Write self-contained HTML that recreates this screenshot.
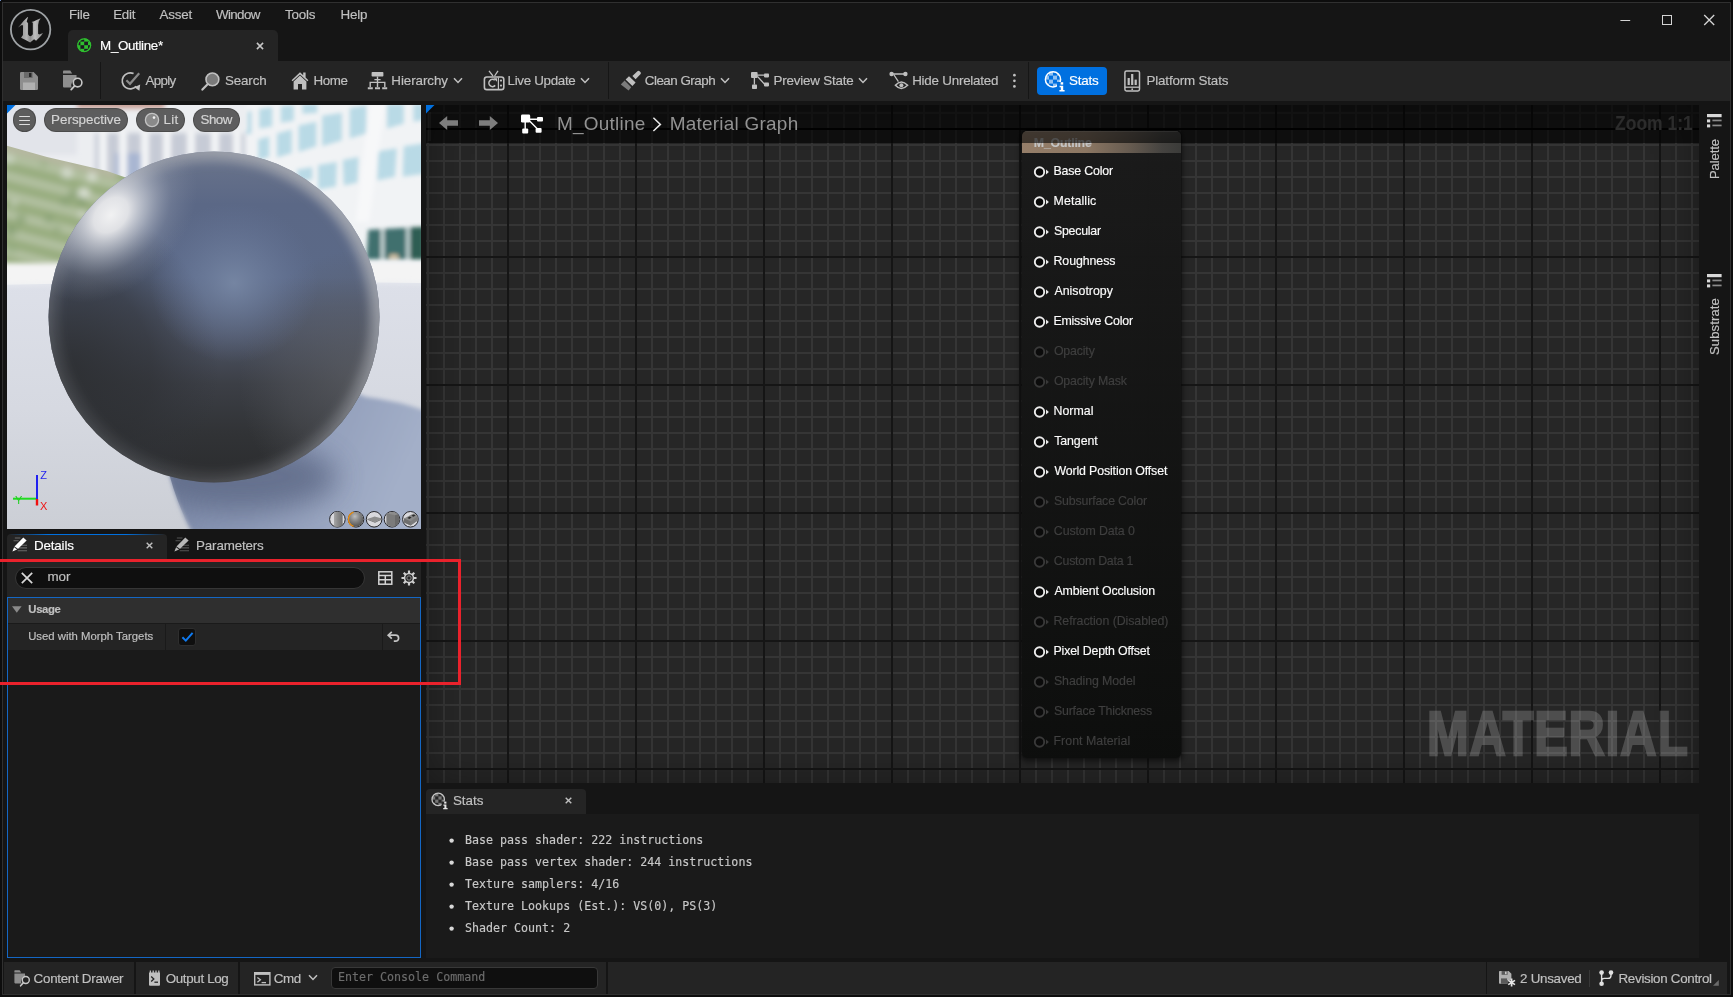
<!DOCTYPE html>
<html lang="en">
<head>
<meta charset="utf-8">
<title>M_Outline - Unreal Editor</title>
<style>
*{box-sizing:border-box;margin:0;padding:0}
html,body{width:1733px;height:997px;overflow:hidden;background:#151515}
body{position:relative;will-change:transform;font-family:"Liberation Sans",sans-serif;color:#c0c0c0;font-size:13px}
.a{position:absolute}
.t{position:absolute;white-space:nowrap;line-height:1;color:#c0c0c0;-webkit-text-stroke:.16px}
.m{font-family:"DejaVu Sans Mono","Liberation Mono",monospace}
.w{color:#fff}
.ns{-webkit-text-stroke:0}
.b{font-weight:bold}
svg{position:absolute;overflow:visible}
.pin{position:absolute;left:1033px;width:16px;height:12px}
.sep{position:absolute;width:1px;background:#151515}
</style>
</head>
<body>
<!-- window frame -->
<div class="a" style="left:0;top:0;width:1733px;height:997px;background:#0d0d0d"></div>
<div class="a" style="left:0;top:0;width:1px;height:1px;background:#6f8cc2"></div>
<div class="a" style="left:2px;top:2px;width:1729px;height:993px;background:#303030"></div>
<div class="a" style="left:3px;top:3px;width:1727px;height:991px;background:#151515"></div>

<!-- document tab -->
<div class="a" style="left:68px;top:30px;width:210px;height:31px;background:#242424;border-radius:5px 5px 0 0"></div>
<!-- toolbar -->
<div class="a" style="left:3px;top:61px;width:1727px;height:40px;background:#242424"></div>
<div class="sep" style="left:100px;top:62px;height:37px;background:#161616"></div>
<div class="sep" style="left:608px;top:62px;height:37px;background:#161616"></div>
<div class="sep" style="left:1028px;top:62px;height:37px;background:#161616"></div>
<div class="a" style="left:1037px;top:67px;width:70px;height:28px;background:#0070e0;border-radius:4px"></div>

<!-- left column panels -->
<div class="a" style="left:7px;top:534px;width:160px;height:25px;background:#242424;border-radius:4px 4px 0 0"></div>
<div class="a" style="left:9px;top:534px;width:156px;height:1px;background:linear-gradient(90deg,rgba(0,112,224,0),#0070e0 25%,#0070e0 75%,rgba(0,112,224,0))"></div>
<div class="a" style="left:7px;top:559px;width:414px;height:39px;background:#242424"></div>
<div class="a" style="left:15px;top:567px;width:350px;height:22px;background:#0f0f0f;border:1px solid #363636;border-radius:11px"></div>
<div class="a" style="left:7px;top:597px;width:414px;height:361px;background:#1a1a1a;border:1px solid #1467c4"></div>
<div class="a" style="left:8px;top:598px;width:412px;height:25px;background:#2f2f2f"></div>
<div class="a" style="left:8px;top:623px;width:412px;height:1px;background:#1a1a1a"></div>
<div class="a" style="left:8px;top:624px;width:412px;height:26px;background:#242424"></div>
<div class="a" style="left:165px;top:624px;width:1px;height:26px;background:#1a1a1a"></div>
<div class="a" style="left:382px;top:624px;width:1px;height:26px;background:#1a1a1a"></div>
<div class="a" style="left:178px;top:628px;width:18px;height:18px;background:#0f0f0f;border:1px solid #2e2e2e;border-radius:3px"></div>

<!-- stats panel -->
<div class="a" style="left:426px;top:789px;width:160px;height:25px;background:#242424;border-radius:4px 4px 0 0"></div>
<div class="a" style="left:426px;top:814px;width:1273px;height:144px;background:#1a1a1a"></div>

<!-- status bar -->
<div class="a" style="left:4px;top:962px;width:130px;height:32px;background:#242424"></div>
<div class="a" style="left:136px;top:962px;width:102px;height:32px;background:#242424"></div>
<div class="a" style="left:240px;top:962px;width:366px;height:32px;background:#242424"></div>
<div class="a" style="left:608px;top:962px;width:878px;height:32px;background:#242424"></div>
<div class="a" style="left:1487px;top:962px;width:240px;height:32px;background:#242424"></div>
<div class="a" style="left:331px;top:967px;width:267px;height:22px;background:#0f0f0f;border:1px solid #383838;border-radius:4px"></div>
<div class="a" style="left:1589px;top:970px;width:1px;height:17px;background:#383838"></div>
<!-- viewport -->
<svg style="left:7px;top:105px" width="414" height="424" viewBox="0 0 414 424">
<defs>
<clipPath id="vpc"><rect x="0" y="0" width="414" height="424"/></clipPath>
<clipPath id="shc"><path d="M160 360L180 300L330 280L359 292Q392 296 419 306V430H186Q168 395 160 360Z"/></clipPath><clipPath id="folc"><path d="M-10 38L40 52L100 66L140 80V172H-10Z"/></clipPath><clipPath id="sphc"><circle cx="207" cy="212" r="165.5"/></clipPath>
<filter id="bl3" filterUnits="userSpaceOnUse" x="-60" y="-60" width="534" height="544"><feGaussianBlur stdDeviation="2.6"/></filter>
<filter id="bl2" filterUnits="userSpaceOnUse" x="-60" y="-60" width="534" height="544"><feGaussianBlur stdDeviation="1.9"/></filter>
<filter id="bl4" filterUnits="userSpaceOnUse" x="-60" y="-60" width="534" height="544"><feGaussianBlur stdDeviation="3.6"/></filter><filter id="bl6" filterUnits="userSpaceOnUse" x="-60" y="-60" width="534" height="544"><feGaussianBlur stdDeviation="5"/></filter>
<filter id="bl9" filterUnits="userSpaceOnUse" x="-60" y="-60" width="534" height="544"><feGaussianBlur stdDeviation="9"/></filter>
<filter id="bl14" filterUnits="userSpaceOnUse" x="-80" y="-80" width="574" height="584"><feGaussianBlur stdDeviation="14"/></filter>
<filter id="bl25" filterUnits="userSpaceOnUse" x="-100" y="-100" width="614" height="624"><feGaussianBlur stdDeviation="24"/></filter>
<linearGradient id="floorg" x1="0" y1="0" x2="0" y2="1"><stop offset="0" stop-color="#dde0e9"/><stop offset=".5" stop-color="#d6d9e1"/><stop offset="1" stop-color="#cbced5"/></linearGradient>
<linearGradient id="shadg" x1="0" y1="0" x2="1" y2="0.25"><stop offset="0" stop-color="#74819f"/><stop offset=".4" stop-color="#8895b3"/><stop offset="1" stop-color="#a3afc8"/></linearGradient>
<linearGradient id="sphg" x1="0" y1="46" x2="0" y2="378" gradientUnits="userSpaceOnUse"><stop offset="0" stop-color="#6a748b"/><stop offset=".16" stop-color="#5b6886"/><stop offset=".38" stop-color="#5b6987"/><stop offset=".55" stop-color="#4e5566"/><stop offset=".70" stop-color="#3c3f46"/><stop offset=".85" stop-color="#313336"/><stop offset="1" stop-color="#2b2c2e"/></linearGradient>
<radialGradient id="spot" cx="0.5" cy="0.5" r="0.5"><stop offset="0" stop-color="#7888a5" stop-opacity=".9"/><stop offset=".45" stop-color="#7080a0" stop-opacity=".5"/><stop offset="1" stop-color="#66759a" stop-opacity="0"/></radialGradient>
<radialGradient id="hl" cx="0.5" cy="0.5" r="0.5"><stop offset="0" stop-color="#f6f6f6" stop-opacity=".97"/><stop offset=".2" stop-color="#efeff0" stop-opacity=".9"/><stop offset=".42" stop-color="#d4d7dd" stop-opacity=".6"/><stop offset=".7" stop-color="#a8aebc" stop-opacity=".22"/><stop offset="1" stop-color="#8a92a6" stop-opacity="0"/></radialGradient>
<linearGradient id="rimg" x1="0" y1="1" x2="1" y2="0"><stop offset="0" stop-color="#9a9da4" stop-opacity=".06"/><stop offset=".45" stop-color="#9a9da4" stop-opacity=".3"/><stop offset="1" stop-color="#b0b3ba" stop-opacity=".95"/></linearGradient>
<radialGradient id="ldk" cx=".5" cy=".5" r=".5"><stop offset="0" stop-color="#2b2d30" stop-opacity=".85"/><stop offset=".55" stop-color="#2d2f33" stop-opacity=".6"/><stop offset="1" stop-color="#30333a" stop-opacity="0"/></radialGradient><radialGradient id="rlt" cx=".5" cy=".5" r=".5"><stop offset="0" stop-color="#63656a" stop-opacity=".6"/><stop offset=".6" stop-color="#5a5c62" stop-opacity=".35"/><stop offset="1" stop-color="#55575c" stop-opacity="0"/></radialGradient><linearGradient id="leftdark" x1="0" y1="0" x2="1" y2="0"><stop offset="0" stop-color="#2c2d30" stop-opacity=".8"/><stop offset=".3" stop-color="#2e3034" stop-opacity=".55"/><stop offset=".55" stop-color="#30333a" stop-opacity="0"/></linearGradient>
</defs>
<g clip-path="url(#vpc)">
<rect width="414" height="424" fill="#eceef1"/>
<!-- right building: pale blue windows, white frames -->
<rect x="225" y="-6" width="200" height="190" fill="#f1f3f5"/>
<g filter="url(#bl2)">
<g fill="#b9dae6">
<path d="M252.3 3.9L265.1 1.9L265.1 21.6L252.3 23.6Z"/>
<path d="M273.9 1.0L286.7 -0.0L286.7 15.7L273.9 17.7Z"/>
<path d="M295.5 -1.0L310.2 -1.0L310.2 7.8L295.5 8.8Z"/>
<path d="M238.5 6.9L244.4 5.9L244.4 28.5L238.5 29.5Z"/>
<path d="M251.3 34.4L262.1 31.4L262.1 52.0L251.3 55.0Z"/>
<path d="M270.0 28.5L284.7 24.5L284.7 48.1L270.0 52.4Z"/>
<path d="M291.6 20.6L309.3 16.7L309.3 41.2L291.6 47.1Z"/>
<path d="M315.2 10.8L334.8 7.8L334.8 35.3L315.2 41.2Z"/>
<path d="M342.7 2.9L359.4 -0.0L359.4 28.5L342.7 33.4Z"/>
<path d="M380.0 -1.0L396.7 -1.0L396.7 18.6L380.0 23.6Z"/>
<path d="M406.5 -1.0L417.3 -1.0L417.3 14.7L406.5 16.7Z"/>
<path d="M289.6 64.8L305.3 61.9L305.3 74.6L291.6 76.6Z"/>
<path d="M311.2 59.9L329.9 57.0L328.9 81.5L311.2 84.5Z"/>
<path d="M335.8 55.0L351.5 52.0L350.5 77.6L336.8 80.5Z"/>
<path d="M371.2 46.2L389.8 43.2L387.9 71.7L370.2 75.6Z"/>
<path d="M396.7 41.2L417.3 38.3L417.3 68.7L395.7 71.7Z"/>
</g>
<path d="M362.3 -1L378 -1L362.3 117L348.6 117Z" fill="#f7f8f9"/>
<path d="M361.3 124.7L417.3 121.8V154.2H359.4Z" fill="#3f6f6e"/>
<path d="M404 122.5L417.3 121.8V154.2H403Z" fill="#2f5d52"/>
<path d="M375.5 124V154M401 122.8V154" stroke="#d5e2e3" stroke-width="3.2"/>
<ellipse cx="386.9" cy="151.5" rx="5" ry="2.2" fill="#dcc6a6"/>
</g>
<!-- middle building columns -->
<g filter="url(#bl3)">
<rect x="88" y="28" width="150" height="52" fill="#c6cbd6"/>
<rect x="108" y="48" width="30" height="30" fill="#a9b6d2"/>
<g stroke="#f3f4f6" stroke-width="8"><path d="M96 26V86"/><path d="M116 26V92"/><path d="M138 26V92"/><path d="M160 24V86"/><path d="M184 22V76"/><path d="M208 20V66"/><path d="M230 18V60"/></g>
<rect x="50" y="-6" width="190" height="32" fill="#eceef1"/>
<rect x="64" y="-6" width="94" height="10" fill="#c89f94"/>
<rect x="-6" y="-6" width="76" height="56" fill="#e2e4ea"/>
</g>
<!-- foliage -->
<g clip-path="url(#folc)"><g filter="url(#bl4)">
<rect x="-12" y="30" width="150" height="150" fill="#a8b893"/>
<path d="M-10 2L130 38" stroke="#85a066" stroke-width="8" opacity=".55"/><path d="M-10 11L130 47" stroke="#c6d1bc" stroke-width="5" opacity=".5"/><path d="M-10 21L130 57" stroke="#85a066" stroke-width="8" opacity=".55"/><path d="M-10 30L130 66" stroke="#c6d1bc" stroke-width="5" opacity=".5"/><path d="M-10 40L130 76" stroke="#85a066" stroke-width="8" opacity=".55"/><path d="M-10 49L130 85" stroke="#c6d1bc" stroke-width="5" opacity=".5"/><path d="M-10 59L130 95" stroke="#85a066" stroke-width="8" opacity=".55"/><path d="M-10 68L130 104" stroke="#c6d1bc" stroke-width="5" opacity=".5"/><path d="M-10 78L130 114" stroke="#85a066" stroke-width="8" opacity=".55"/><path d="M-10 87L130 123" stroke="#c6d1bc" stroke-width="5" opacity=".5"/><path d="M-10 97L130 133" stroke="#85a066" stroke-width="8" opacity=".55"/><path d="M-10 106L130 142" stroke="#c6d1bc" stroke-width="5" opacity=".5"/><path d="M-10 116L130 152" stroke="#85a066" stroke-width="8" opacity=".55"/><path d="M-10 125L130 161" stroke="#c6d1bc" stroke-width="5" opacity=".5"/><path d="M-10 135L130 171" stroke="#85a066" stroke-width="8" opacity=".55"/><path d="M-10 144L130 180" stroke="#c6d1bc" stroke-width="5" opacity=".5"/><path d="M-10 154L130 190" stroke="#85a066" stroke-width="8" opacity=".55"/><path d="M-10 163L130 199" stroke="#c6d1bc" stroke-width="5" opacity=".5"/><path d="M-10 173L130 209" stroke="#85a066" stroke-width="8" opacity=".55"/><path d="M-10 182L130 218" stroke="#c6d1bc" stroke-width="5" opacity=".5"/><path d="M-10 192L130 228" stroke="#85a066" stroke-width="8" opacity=".55"/><path d="M-10 201L130 237" stroke="#c6d1bc" stroke-width="5" opacity=".5"/>
<circle cx="42" cy="114" r="4.4" fill="#86a072" opacity=".85"/><circle cx="85" cy="72" r="4.4" fill="#e8ebe4" opacity=".85"/><circle cx="59" cy="71" r="3.9" fill="#86a072" opacity=".85"/><circle cx="5" cy="143" r="4.9" fill="#93ab80" opacity=".85"/><circle cx="58" cy="96" r="5.0" fill="#86a072" opacity=".85"/><circle cx="60" cy="68" r="5.5" fill="#dfe4da" opacity=".85"/><circle cx="2" cy="54" r="4.8" fill="#d2dacb" opacity=".85"/><circle cx="77" cy="88" r="5.5" fill="#e8ebe4" opacity=".85"/><circle cx="50" cy="124" r="3.0" fill="#86a072" opacity=".85"/><circle cx="4" cy="125" r="6.0" fill="#86a072" opacity=".85"/><circle cx="100" cy="147" r="3.8" fill="#93ab80" opacity=".85"/><circle cx="75" cy="109" r="3.2" fill="#dfe4da" opacity=".85"/><circle cx="75" cy="96" r="4.2" fill="#7c9868" opacity=".85"/><circle cx="96" cy="147" r="3.6" fill="#dfe4da" opacity=".85"/><circle cx="92" cy="56" r="5.9" fill="#86a072" opacity=".85"/><circle cx="37" cy="58" r="3.6" fill="#93ab80" opacity=".85"/><circle cx="66" cy="89" r="4.0" fill="#7c9868" opacity=".85"/><circle cx="96" cy="137" r="3.4" fill="#dfe4da" opacity=".85"/><circle cx="69" cy="51" r="5.4" fill="#86a072" opacity=".85"/><circle cx="14" cy="114" r="4.5" fill="#86a072" opacity=".85"/><circle cx="98" cy="138" r="4.9" fill="#86a072" opacity=".85"/><circle cx="7" cy="98" r="3.0" fill="#d2dacb" opacity=".85"/>
<path d="M-10 40L110 70" stroke="#d9c3c8" stroke-width="6" opacity=".6"/>
</g></g>
<g filter="url(#bl3)"><rect x="-6" y="166" width="120" height="8" fill="#eceeea"/></g>
<!-- far ground -->
<rect x="-8" y="158" width="430" height="24" fill="#f4f4f4" filter="url(#bl3)"/>
<!-- floor -->
<path d="M-5 180Q207 174 419 178V430H-5Z" fill="url(#floorg)"/>
<path d="M-5 180Q207 174 419 178" stroke="#eceef2" stroke-width="2" fill="none" filter="url(#bl2)"/>
<!-- shadow -->
<path d="M160 360L180 300L330 280L359 292Q392 296 419 306V430H186Q168 395 160 360Z" fill="url(#shadg)" filter="url(#bl2)"/>
<ellipse cx="235" cy="372" rx="95" ry="34" fill="#5f6b87" opacity=".85" filter="url(#bl14)" clip-path="url(#shc)"/>
<!-- sphere -->
<circle cx="207" cy="212" r="165.5" fill="url(#sphg)"/>
<g clip-path="url(#sphc)">
<ellipse cx="62" cy="262" rx="150" ry="165" fill="url(#ldk)"/>
<ellipse cx="352" cy="275" rx="120" ry="130" fill="url(#rlt)"/>
<ellipse cx="227" cy="178" rx="84" ry="80" fill="url(#spot)"/>
<circle cx="207" cy="212" r="163" fill="none" stroke="url(#rimg)" stroke-width="15" filter="url(#bl6)"/>
<circle cx="207" cy="212" r="165" fill="none" stroke="url(#rimg)" stroke-width="3" filter="url(#bl2)"/>
<ellipse cx="104" cy="110" rx="100" ry="72" fill="url(#hl)" transform="rotate(-46 104 110)"/>
</g>
<!-- axis -->
<path d="M6 393.7H30" stroke="#1fdc1f" stroke-width="2"/><path d="M30 370V394" stroke="#2020f0" stroke-width="2"/><path d="M30 394V400.5" stroke="#f01010" stroke-width="2.4"/>
<text x="33.2" y="374" font-family="Liberation Sans, sans-serif" font-size="11" fill="#2525ee">Z</text>
<text x="33" y="404.5" font-family="Liberation Sans, sans-serif" font-size="11" fill="#ee1515">X</text>
<text x="8" y="398.5" font-family="Liberation Sans, sans-serif" font-size="11" fill="#1fd01f">Y</text>
</g>
</svg>
<svg style="left:7px;top:105px" width="9" height="9" viewBox="0 0 9 9"><path d="M0 0H8.5L0 8.5Z" fill="#0070e0"/></svg>
<!-- viewport toolbar pills -->
<div class="a" style="left:13px;top:108px;width:23px;height:23.5px;border-radius:12px;background:rgba(84,84,84,.94);border:1px solid rgba(60,60,60,.55)"></div>
<div class="a" style="left:44px;top:108px;width:84px;height:23.5px;border-radius:12px;background:rgba(84,84,84,.94);border:1px solid rgba(60,60,60,.55)"></div>
<div class="a" style="left:136px;top:108px;width:49px;height:23.5px;border-radius:12px;background:rgba(84,84,84,.94);border:1px solid rgba(60,60,60,.55)"></div>
<div class="a" style="left:193px;top:108px;width:47px;height:23.5px;border-radius:12px;background:rgba(84,84,84,.94);border:1px solid rgba(60,60,60,.55)"></div>
<svg style="left:18px;top:114px" width="13" height="12" viewBox="0 0 13 12"><path d="M1.2 2.5H11.9M1.2 6.5H11.9M1.2 10.5H11.9" stroke="#dedede" stroke-width="1.1" fill="none"/></svg>
<svg style="left:144px;top:112px" width="16" height="16" viewBox="0 0 16 16"><circle cx="8" cy="8" r="6.6" fill="#8a8a8a" stroke="#c4c4c4" stroke-width="1.3"/><circle cx="10" cy="5.6" r="1.3" fill="#f0f0f0"/></svg>
<!-- graph -->
<div class="a" id="graph" style="left:426px;top:105px;width:1273px;height:678px;overflow:hidden;background:
linear-gradient(90deg,#151515 2px,transparent 2px) 81px 0/128px 128px,
linear-gradient(#151515 2px,transparent 2px) 0 23px/128px 128px,
linear-gradient(90deg,#353535 2px,transparent 2px) 1px 0/16px 16px,
linear-gradient(#353535 2px,transparent 2px) 0 7px/16px 16px,#262626">
<div class="a" style="left:0;top:0;width:1273px;height:678px;box-shadow:inset 0 0 40px rgba(0,0,0,.35)"></div>
</div>
<!-- node -->
<div class="a" style="left:1021px;top:130px;width:161px;height:629px;background:rgba(8,8,8,.6);border-radius:6px;box-shadow:0 2px 5px 1px rgba(0,0,0,.45)"></div>
<div class="a" style="left:1022px;top:131px;width:159px;height:627px;background:linear-gradient(180deg,rgba(27,27,27,.95),rgba(13,14,13,.97));border-radius:5px;overflow:hidden">
<div class="a" style="left:0;top:0;width:159px;height:22px;background:linear-gradient(90deg,#957e69 0%,#8c7763 40%,#665b50 68%,#454340 88%,#3b3b39 100%)"></div>
<div class="a" style="left:0;top:0;width:159px;height:22px;background:linear-gradient(180deg,rgba(255,255,255,.10) 0%,rgba(255,255,255,.05) 50%,rgba(255,255,255,0) 56%,rgba(0,0,0,0) 100%)"></div>
<div class="a" style="left:3px;top:0;width:153px;height:1px;background:rgba(255,255,255,.18)"></div>
</div>

<svg style="left:1032px;top:163.5px" width="18" height="16" viewBox="0 0 18 16"><circle cx="7.5" cy="8" r="4.7" fill="#080808" stroke="#ececec" stroke-width="1.9"/><path d="M14 5.6 L16.9 8 L14 10.4Z" fill="#ececec"/></svg>
<svg style="left:1032px;top:193.5px" width="18" height="16" viewBox="0 0 18 16"><circle cx="7.5" cy="8" r="4.7" fill="#080808" stroke="#ececec" stroke-width="1.9"/><path d="M14 5.6 L16.9 8 L14 10.4Z" fill="#ececec"/></svg>
<svg style="left:1032px;top:223.5px" width="18" height="16" viewBox="0 0 18 16"><circle cx="7.5" cy="8" r="4.7" fill="#080808" stroke="#ececec" stroke-width="1.9"/><path d="M14 5.6 L16.9 8 L14 10.4Z" fill="#ececec"/></svg>
<svg style="left:1032px;top:253.5px" width="18" height="16" viewBox="0 0 18 16"><circle cx="7.5" cy="8" r="4.7" fill="#080808" stroke="#ececec" stroke-width="1.9"/><path d="M14 5.6 L16.9 8 L14 10.4Z" fill="#ececec"/></svg>
<svg style="left:1032px;top:283.5px" width="18" height="16" viewBox="0 0 18 16"><circle cx="7.5" cy="8" r="4.7" fill="#080808" stroke="#ececec" stroke-width="1.9"/><path d="M14 5.6 L16.9 8 L14 10.4Z" fill="#ececec"/></svg>
<svg style="left:1032px;top:313.5px" width="18" height="16" viewBox="0 0 18 16"><circle cx="7.5" cy="8" r="4.7" fill="#080808" stroke="#ececec" stroke-width="1.9"/><path d="M14 5.6 L16.9 8 L14 10.4Z" fill="#ececec"/></svg>
<svg style="left:1032px;top:343.5px" width="18" height="16" viewBox="0 0 18 16"><circle cx="7.5" cy="8" r="4.7" fill="#0b0b0b" stroke="#393939" stroke-width="1.9"/><path d="M14 5.6 L16.9 8 L14 10.4Z" fill="#393939"/></svg>
<svg style="left:1032px;top:373.5px" width="18" height="16" viewBox="0 0 18 16"><circle cx="7.5" cy="8" r="4.7" fill="#0b0b0b" stroke="#393939" stroke-width="1.9"/><path d="M14 5.6 L16.9 8 L14 10.4Z" fill="#393939"/></svg>
<svg style="left:1032px;top:403.5px" width="18" height="16" viewBox="0 0 18 16"><circle cx="7.5" cy="8" r="4.7" fill="#080808" stroke="#ececec" stroke-width="1.9"/><path d="M14 5.6 L16.9 8 L14 10.4Z" fill="#ececec"/></svg>
<svg style="left:1032px;top:433.5px" width="18" height="16" viewBox="0 0 18 16"><circle cx="7.5" cy="8" r="4.7" fill="#080808" stroke="#ececec" stroke-width="1.9"/><path d="M14 5.6 L16.9 8 L14 10.4Z" fill="#ececec"/></svg>
<svg style="left:1032px;top:463.5px" width="18" height="16" viewBox="0 0 18 16"><circle cx="7.5" cy="8" r="4.7" fill="#080808" stroke="#ececec" stroke-width="1.9"/><path d="M14 5.6 L16.9 8 L14 10.4Z" fill="#ececec"/></svg>
<svg style="left:1032px;top:493.5px" width="18" height="16" viewBox="0 0 18 16"><circle cx="7.5" cy="8" r="4.7" fill="#0b0b0b" stroke="#393939" stroke-width="1.9"/><path d="M14 5.6 L16.9 8 L14 10.4Z" fill="#393939"/></svg>
<svg style="left:1032px;top:523.5px" width="18" height="16" viewBox="0 0 18 16"><circle cx="7.5" cy="8" r="4.7" fill="#0b0b0b" stroke="#393939" stroke-width="1.9"/><path d="M14 5.6 L16.9 8 L14 10.4Z" fill="#393939"/></svg>
<svg style="left:1032px;top:553.5px" width="18" height="16" viewBox="0 0 18 16"><circle cx="7.5" cy="8" r="4.7" fill="#0b0b0b" stroke="#393939" stroke-width="1.9"/><path d="M14 5.6 L16.9 8 L14 10.4Z" fill="#393939"/></svg>
<svg style="left:1032px;top:583.5px" width="18" height="16" viewBox="0 0 18 16"><circle cx="7.5" cy="8" r="4.7" fill="#080808" stroke="#ececec" stroke-width="1.9"/><path d="M14 5.6 L16.9 8 L14 10.4Z" fill="#ececec"/></svg>
<svg style="left:1032px;top:613.5px" width="18" height="16" viewBox="0 0 18 16"><circle cx="7.5" cy="8" r="4.7" fill="#0b0b0b" stroke="#393939" stroke-width="1.9"/><path d="M14 5.6 L16.9 8 L14 10.4Z" fill="#393939"/></svg>
<svg style="left:1032px;top:643.5px" width="18" height="16" viewBox="0 0 18 16"><circle cx="7.5" cy="8" r="4.7" fill="#080808" stroke="#ececec" stroke-width="1.9"/><path d="M14 5.6 L16.9 8 L14 10.4Z" fill="#ececec"/></svg>
<svg style="left:1032px;top:673.5px" width="18" height="16" viewBox="0 0 18 16"><circle cx="7.5" cy="8" r="4.7" fill="#0b0b0b" stroke="#393939" stroke-width="1.9"/><path d="M14 5.6 L16.9 8 L14 10.4Z" fill="#393939"/></svg>
<svg style="left:1032px;top:703.5px" width="18" height="16" viewBox="0 0 18 16"><circle cx="7.5" cy="8" r="4.7" fill="#0b0b0b" stroke="#393939" stroke-width="1.9"/><path d="M14 5.6 L16.9 8 L14 10.4Z" fill="#393939"/></svg>
<svg style="left:1032px;top:733.5px" width="18" height="16" viewBox="0 0 18 16"><circle cx="7.5" cy="8" r="4.7" fill="#0b0b0b" stroke="#393939" stroke-width="1.9"/><path d="M14 5.6 L16.9 8 L14 10.4Z" fill="#393939"/></svg><!-- node text -->
<span class="t b" style="left:1033.87px;top:137px;font-size:12.36px;letter-spacing:-0.224px;color:#c4c4c4">M_Outline</span>
<span class="t" style="left:1053.49px;top:165px;font-size:12.36px;letter-spacing:-0.169px;color:#fbfbfb">Base Color</span>
<span class="t" style="left:1053.49px;top:195px;font-size:12.36px;letter-spacing:0.121px;color:#fbfbfb">Metallic</span>
<span class="t" style="left:1053.94px;top:225px;font-size:12.36px;letter-spacing:-0.231px;color:#fbfbfb">Specular</span>
<span class="t" style="left:1053.49px;top:255px;font-size:12.36px;letter-spacing:-0.071px;color:#fbfbfb">Roughness</span>
<span class="t" style="left:1054.48px;top:285px;font-size:12.36px;letter-spacing:0.006px;color:#fbfbfb">Anisotropy</span>
<span class="t" style="left:1053.49px;top:315px;font-size:12.36px;letter-spacing:-0.223px;color:#fbfbfb">Emissive Color</span>
<span class="t" style="left:1053.91px;top:345px;font-size:12.36px;letter-spacing:-0.165px;color:#3f3f3f">Opacity</span>
<span class="t" style="left:1053.91px;top:375px;font-size:12.36px;letter-spacing:-0.164px;color:#3f3f3f">Opacity Mask</span>
<span class="t" style="left:1053.49px;top:405px;font-size:12.36px;letter-spacing:0.022px;color:#fbfbfb">Normal</span>
<span class="t" style="left:1054.22px;top:435px;font-size:12.36px;letter-spacing:-0.098px;color:#fbfbfb">Tangent</span>
<span class="t" style="left:1054.45px;top:465px;font-size:12.36px;letter-spacing:-0.137px;color:#fbfbfb">World Position Offset</span>
<span class="t" style="left:1053.94px;top:495px;font-size:12.36px;letter-spacing:-0.162px;color:#3f3f3f">Subsurface Color</span>
<span class="t" style="left:1053.87px;top:525px;font-size:12.36px;letter-spacing:-0.127px;color:#3f3f3f">Custom Data 0</span>
<span class="t" style="left:1053.87px;top:555px;font-size:12.36px;letter-spacing:-0.242px;color:#3f3f3f">Custom Data 1</span>
<span class="t" style="left:1054.48px;top:585px;font-size:12.36px;letter-spacing:-0.151px;color:#fbfbfb">Ambient Occlusion</span>
<span class="t" style="left:1053.49px;top:615px;font-size:12.36px;letter-spacing:-0.056px;color:#3f3f3f">Refraction (Disabled)</span>
<span class="t" style="left:1053.49px;top:645px;font-size:12.36px;letter-spacing:-0.171px;color:#fbfbfb">Pixel Depth Offset</span>
<span class="t" style="left:1053.94px;top:675px;font-size:12.36px;letter-spacing:-0.081px;color:#3f3f3f">Shading Model</span>
<span class="t" style="left:1053.94px;top:705px;font-size:12.36px;letter-spacing:-0.198px;color:#3f3f3f">Surface Thickness</span>
<span class="t" style="left:1053.49px;top:735px;font-size:12.36px;letter-spacing:0.038px;color:#3f3f3f">Front Material</span>
<!-- graph title band -->
<div class="a" style="left:426px;top:105px;width:1273px;height:38px;background:rgba(0,0,0,.6)"></div>
<div class="a" style="left:426px;top:128px;width:1273px;height:2px;background:rgba(0,0,0,.85)"></div>
<svg style="left:426px;top:105px" width="9" height="9" viewBox="0 0 9 9"><path d="M0 0H8.5L0 8.5Z" fill="#0070e0"/></svg>
<div class="a" style="left:428px;top:112px;width:3px;height:29px;background:rgba(255,255,255,.035)"></div>
<!-- UE logo -->
<svg style="left:9px;top:8px" width="44" height="44" viewBox="0 0 44 44">
<defs><linearGradient id="ueg" x1="0" y1="0" x2="1" y2="0"><stop offset="0" stop-color="#8a8a8a"/><stop offset=".35" stop-color="#b4b4b4"/><stop offset=".5" stop-color="#8e8e8e"/><stop offset=".68" stop-color="#c0c0c0"/><stop offset="1" stop-color="#888"/></linearGradient></defs>
<circle cx="21.6" cy="21.6" r="19.7" fill="none" stroke="#9fa3a6" stroke-width="1.8"/>
<path d="M8.79 19.82L11.54 16.81L14.55 13.05L18.31 9.29L19.17 8.94L18.31 11.54L17.66 13.55L19.07 15.15L19.07 26.34L20.07 27.69L21.47 28.19L22.83 27.59L23.83 26.34L23.83 14.65L22.48 13.95L25.08 13.15L27.59 12.05L31.70 10.14L29.85 13.30L29.10 17.06L29.10 25.69L30.20 26.59L34.01 24.98L32.11 27.84L29.60 30.35L27.09 32.71L25.08 31.20L21.17 34.41L17.06 32.36L12.05 29.70L13.95 27.09L14.05 17.16L12.05 17.16Z" fill="url(#ueg)"/>
</svg>
<!-- tab icon -->
<svg style="left:77px;top:38px" width="15" height="15" viewBox="0 0 15 15">
<defs><clipPath id="tic"><circle cx="7.2" cy="7.2" r="6.9"/></clipPath></defs>
<circle cx="7.2" cy="7.2" r="6.9" fill="#2fbf2f"/>
<g clip-path="url(#tic)" fill="#1d1a22"><rect x="3.4" y="0" width="3.8" height="3.6"/><rect x="7.2" y="3.6" width="3.8" height="3.6"/><rect x="3.4" y="7.2" width="3.8" height="3.6"/><rect x="-0.4" y="3.6" width="3.8" height="3.6"/><rect x="7.2" y="10.8" width="3.8" height="3.6"/><rect x="11" y="7.2" width="3.8" height="3.6"/><rect x="11" y="0" width="3.8" height="3.6"/><rect x="-.4" y="10.8" width="3.8" height="3.6"/></g>
<circle cx="7.2" cy="7.2" r="6.4" fill="none" stroke="#2fbf2f" stroke-width="1.2"/>
</svg>
<!-- tab close -->
<svg style="left:256px;top:42px" width="8" height="8" viewBox="0 0 8 8"><path d="M.9 .9L7.1 7.1M7.1 .9L.9 7.1" stroke="#c8c8c8" stroke-width="1.5"/></svg>
<!-- window controls -->
<svg style="left:1620px;top:14px" width="96" height="12" viewBox="0 0 96 12"><path d="M.4 6.5H10.2" stroke="#d4d4d4" stroke-width="1"/><rect x="42.5" y="1.5" width="9" height="9" fill="none" stroke="#d4d4d4" stroke-width="1"/><path d="M84.2 1L94.2 11M94.2 1L84.2 11" stroke="#d4d4d4" stroke-width="1.35"/></svg>

<!-- toolbar: save -->
<svg style="left:20px;top:72px" width="18" height="18" viewBox="0 0 18 18"><path d="M0 1.2Q0 0 1.2 0H13.6L18 4.4V16.8Q18 18 16.8 18H1.2Q0 18 0 16.8Z" fill="#8e8e8e"/><rect x="4" y="0" width="8.6" height="6" fill="#6a6a6a"/><rect x="9" y="1" width="2.4" height="4" fill="#262626"/><rect x="3" y="10.5" width="12" height="7.5" fill="#b0b0b0"/></svg>
<!-- toolbar: browse -->
<svg style="left:62px;top:70px" width="22" height="22" viewBox="0 0 22 22"><path d="M1 1.2Q1 0.6 1.8 .6H8.2L10.2 3.4H1Z" fill="#8e8e8e"/><path d="M1 5H14.5V9.2A6.2 6.2 0 0 0 9.6 17.5H2Q1 17.5 1 16.5Z" fill="#8e8e8e"/><circle cx="15.6" cy="12.6" r="4.3" fill="none" stroke="#c8c8c8" stroke-width="1.6"/><path d="M12.6 15.8L9.2 19.6" stroke="#c8c8c8" stroke-width="1.8" stroke-linecap="round"/></svg>
<!-- apply -->
<svg style="left:121px;top:71px" width="21" height="21" viewBox="0 0 21 21"><path d="M15.2 15.2A8 8 0 1 1 12.6 2.6" fill="none" stroke="#c0c0c0" stroke-width="1.7"/><path d="M19.2 13.6L18.4 19.8L13.2 16.2Z" fill="#c0c0c0"/><path d="M5.4 9.2L9 12.8L18.2 2.2" fill="none" stroke="#8a8a8a" stroke-width="2.2"/></svg>
<!-- search -->
<svg style="left:201px;top:71px" width="21" height="21" viewBox="0 0 21 21"><circle cx="11.4" cy="8.4" r="6.4" fill="#7a7a7a" stroke="#c0c0c0" stroke-width="1.6"/><path d="M6.6 13.2L1.4 18.6" stroke="#c0c0c0" stroke-width="2.2" stroke-linecap="round"/></svg>
<!-- home -->
<svg style="left:291px;top:71px" width="18" height="19" viewBox="0 0 18 19"><path d="M9 1.2L.6 9.2L1.6 10.2L9 3.4L16.4 10.2L17.4 9.2L14.6 6.5V1.4H12.2V4.2Z" fill="#c0c0c0"/><path d="M2.6 10.4L9 4.6L15.4 10.4V18.4H11V13H7V18.4H2.6Z" fill="#c0c0c0"/></svg>
<!-- hierarchy -->
<svg style="left:367px;top:71px" width="21" height="20" viewBox="0 0 21 20"><rect x="4.6" y="1" width="11.8" height="4.6" rx=".8" fill="#c0c0c0"/><path d="M10.5 5.6V16M3.2 16V11.4H17.8V16M7.4 8.6H13.6" stroke="#c0c0c0" stroke-width="1.4" fill="none"/><path d="M.8 17.2H5.8M8 17.2H13M15.2 17.2H20.2" stroke="#c0c0c0" stroke-width="2"/></svg>
<!-- live update -->
<svg style="left:483px;top:70px" width="22" height="22" viewBox="0 0 22 22"><path d="M6 .8L10 6M15 .8L11.6 6" stroke="#c0c0c0" stroke-width="1.3" fill="none"/><rect x="1.4" y="7" width="19.4" height="12.6" rx="2.4" fill="none" stroke="#c0c0c0" stroke-width="1.6"/><circle cx="18" cy="10.6" r="1.1" fill="#c0c0c0"/><circle cx="18" cy="15.6" r="1.1" fill="#c0c0c0"/><path d="M12.2 15.4A3.6 3.6 0 1 1 11.8 10.2" fill="none" stroke="#c0c0c0" stroke-width="1.6"/><path d="M10.4 8.2H14V11.8Z" fill="#c0c0c0"/><path d="M15.4 7.6V19" stroke="#c0c0c0" stroke-width="1.2"/></svg>
<!-- clean graph -->
<svg style="left:620px;top:70px" width="22" height="22" viewBox="0 0 22 22"><path d="M17.4 1.2Q18.6 .2 19.6 1.2L20.6 2.2Q21.4 3.2 20.4 4.2L15.6 9.2L12.4 6Z" fill="#c0c0c0"/><path d="M9 6.2L15.6 12.6L12.4 16L5.6 9.4Z" fill="#c0c0c0"/><path d="M4.6 10.6L11.2 17.2L8.6 20.6L.8 14.4Z" fill="#7c7c7c"/></svg>
<!-- preview state -->
<svg style="left:751px;top:72px" width="19" height="18" viewBox="0 0 19 18"><rect x="0" y="0" width="6.6" height="6" rx="1" fill="#c0c0c0"/><rect x="13" y="1.4" width="5" height="4" rx=".8" fill="#c0c0c0"/><rect x="13" y="10.4" width="5" height="4" rx=".8" fill="#c0c0c0"/><rect x="1" y="12.6" width="5" height="4.4" rx=".8" fill="#c0c0c0"/><path d="M6 3.2H13M6.4 4.4L13.4 12M3.4 6V12.6" stroke="#c0c0c0" stroke-width="1.3" fill="none"/></svg>
<!-- hide unrelated -->
<svg style="left:889px;top:71px" width="20" height="20" viewBox="0 0 20 20"><circle cx="2.6" cy="3" r="2.2" fill="#c0c0c0"/><circle cx="16.4" cy="3" r="2.2" fill="#c0c0c0"/><path d="M2.6 3H16.4M5 4L9.4 10.6" stroke="#c0c0c0" stroke-width="1.3"/><path d="M6.4 14.2Q12.2 7.6 18.6 14.2Q12.2 20.6 6.4 14.2Z" fill="none" stroke="#c0c0c0" stroke-width="1.5"/><circle cx="12.4" cy="14.2" r="2" fill="#c0c0c0"/></svg>
<!-- 3 dots -->
<svg style="left:1012px;top:73px" width="5" height="16" viewBox="0 0 5 16"><circle cx="2.4" cy="2.2" r="1.35" fill="#c0c0c0"/><circle cx="2.4" cy="7.8" r="1.35" fill="#c0c0c0"/><circle cx="2.4" cy="13.4" r="1.35" fill="#c0c0c0"/></svg>
<!-- chevrons -->
<svg style="left:453px;top:77px" width="10" height="7" viewBox="0 0 10 7"><path d="M1 1.2L5 5.4L9 1.2" stroke="#c0c0c0" stroke-width="1.5" fill="none"/></svg>
<svg style="left:580px;top:77px" width="10" height="7" viewBox="0 0 10 7"><path d="M1 1.2L5 5.4L9 1.2" stroke="#c0c0c0" stroke-width="1.5" fill="none"/></svg>
<svg style="left:719.5px;top:77px" width="10" height="7" viewBox="0 0 10 7"><path d="M1 1.2L5 5.4L9 1.2" stroke="#c0c0c0" stroke-width="1.5" fill="none"/></svg>
<svg style="left:858px;top:77px" width="10" height="7" viewBox="0 0 10 7"><path d="M1 1.2L5 5.4L9 1.2" stroke="#c0c0c0" stroke-width="1.5" fill="none"/></svg>
<svg style="left:307.5px;top:974px" width="10" height="7" viewBox="0 0 10 7"><path d="M1 1.2L5 5.4L9 1.2" stroke="#c0c0c0" stroke-width="1.5" fill="none"/></svg>
<!-- stats icon (toolbar) -->
<svg style="left:1044px;top:70px" width="22" height="22" viewBox="0 0 22 22">
<defs><clipPath id="sic"><circle cx="9" cy="9.4" r="7.6"/></clipPath></defs>
<g clip-path="url(#sic)" fill="#8fc0f2"><rect x="1" y="5.6" width="4" height="4"/><rect x="5" y="1.6" width="4" height="4"/><rect x="9" y="5.6" width="4" height="4"/><rect x="5" y="9.6" width="4" height="4"/><rect x="13" y="1.6" width="4" height="4"/><rect x="1" y="13.6" width="4" height="4"/><rect x="9" y="13.6" width="4" height="4"/><rect x="13" y="9.6" width="4" height="4"/></g>
<circle cx="9" cy="9.4" r="7.6" fill="none" stroke="#fff" stroke-width="1.5"/>
<rect x="13" y="12" width="9" height="10" fill="#0070e0"/>
<rect x="16.6" y="12.2" width="2.6" height="2.4" fill="#fff"/><path d="M15.6 15.8H19.2V20H20.6V21.4H15.4V20H16.8V17.2H15.6Z" fill="#fff"/>
</svg>
<!-- platform stats -->
<svg style="left:1124px;top:70px" width="17" height="22" viewBox="0 0 17 22"><rect x=".9" y=".9" width="14.6" height="20" rx="1.6" fill="none" stroke="#c0c0c0" stroke-width="1.5"/><path d="M.9 17.2H15.5" stroke="#c0c0c0" stroke-width="1.3"/><rect x="3.6" y="8" width="2.2" height="7" fill="#c0c0c0"/><rect x="7.1" y="4" width="2.2" height="11" fill="#c0c0c0"/><rect x="10.6" y="9.6" width="2.2" height="5.4" fill="#c0c0c0"/><circle cx="8.2" cy="19.2" r=".9" fill="#c0c0c0"/></svg>

<!-- graph nav arrows -->
<svg style="left:439px;top:116px" width="20" height="14" viewBox="0 0 20 14"><path d="M0 7L8.2 0V4.2H19V9.8H8.2V14Z" fill="#7d7d7d"/></svg>
<svg style="left:477.5px;top:116px" width="20" height="14" viewBox="0 0 20 14"><path d="M20 7L11.8 0V4.2H1V9.8H11.8V14Z" fill="#7d7d7d"/></svg>
<!-- breadcrumb graph icon -->
<svg style="left:521px;top:114px" width="23" height="20" viewBox="0 0 23 20"><rect x="0" y=".6" width="9.2" height="8" rx="1.4" fill="#fff"/><rect x="16" y="3" width="6" height="4.6" rx="1" fill="#fff"/><rect x="14.6" y="14" width="6" height="4.8" rx="1" fill="#fff"/><rect x="1.2" y="14.6" width="6" height="4.8" rx="1" fill="#fff"/><path d="M9 5.2H16.4M8.6 7L16 14.4M4.2 8V15" stroke="#fff" stroke-width="1.4" fill="none"/></svg>
<svg style="left:652px;top:117px" width="10" height="15" viewBox="0 0 10 15"><path d="M1.4 .8L8.4 7.4L1.4 14" stroke="#e8e8e8" stroke-width="1.5" fill="none"/></svg>

<!-- side tabs icons -->
<svg style="left:1706.5px;top:113.5px" width="15" height="14" viewBox="0 0 15 14"><rect x="0" y="0" width="14.6" height="3.2" fill="#d8d8d8"/><rect x="0" y="5.4" width="3.2" height="3" fill="#d8d8d8"/><rect x="0" y="10.4" width="3.2" height="3" fill="#d8d8d8"/><rect x="5.4" y="5.6" width="9.2" height="1.7" fill="#8a8a8a"/><rect x="5.4" y="10.6" width="9.2" height="1.7" fill="#8a8a8a"/></svg>
<svg style="left:1706.5px;top:273.5px" width="15" height="14" viewBox="0 0 15 14"><rect x="0" y="0" width="14.6" height="3.2" fill="#d8d8d8"/><rect x="0" y="5.4" width="3.2" height="3" fill="#d8d8d8"/><rect x="0" y="10.4" width="3.2" height="3" fill="#d8d8d8"/><rect x="5.4" y="5.6" width="9.2" height="1.7" fill="#8a8a8a"/><rect x="5.4" y="10.6" width="9.2" height="1.7" fill="#8a8a8a"/></svg>

<!-- details tab icons -->
<svg style="left:11.5px;top:537.3px" width="16" height="15" viewBox="0 0 17 16"><path d="M3 1H9M1.6 4H7" stroke="#6a6a6a" stroke-width="1.2"/><path d="M8 8.8H16M5 11.6H16M6 14.6H16" stroke="#6a6a6a" stroke-width="1.2"/><path d="M12 .6L15.6 3.6L6.4 12.6L2.6 10Z" fill="#fff"/><path d="M2.2 10.8L5.4 13.2L.4 15.4Z" fill="#fff"/></svg>
<svg style="left:173.5px;top:537.3px" width="16" height="15" viewBox="0 0 17 16"><path d="M3 1H9M1.6 4H7" stroke="#555" stroke-width="1.2"/><path d="M8 8.8H16M5 11.6H16M6 14.6H16" stroke="#555" stroke-width="1.2"/><path d="M12 .6L15.6 3.6L6.4 12.6L2.6 10Z" fill="#b8b8b8"/><path d="M2.2 10.8L5.4 13.2L.4 15.4Z" fill="#b8b8b8"/></svg>
<svg style="left:145.5px;top:542px" width="7" height="7" viewBox="0 0 7 7"><path d="M.7 .7L6.3 6.3M6.3 .7L.7 6.3" stroke="#c0c0c0" stroke-width="1.4"/></svg>
<!-- search clear X -->
<svg style="left:21px;top:572px" width="12" height="12" viewBox="0 0 12 12"><path d="M.8 .8L11.2 11.2M11.2 .8L.8 11.2" stroke="#d8d8d8" stroke-width="1.7"/></svg>
<!-- table icon -->
<svg style="left:377.5px;top:571px" width="15" height="14" viewBox="0 0 15 14"><rect x=".8" y=".8" width="13" height="12.4" fill="none" stroke="#d4d4d4" stroke-width="1.5"/><path d="M.8 4.6H13.8M.8 8.8H13.8M7.3 4.6V13" stroke="#d4d4d4" stroke-width="1.5"/></svg>
<!-- gear -->
<svg style="left:401.3px;top:570.3px" width="16" height="16" viewBox="0 0 17 17"><g stroke="#d0d0d0" stroke-width="2.3"><path d="M8.5 .5V16.5M.5 8.5H16.5M2.9 2.9L14.1 14.1M14.1 2.9L2.9 14.1"/></g><circle cx="8.5" cy="8.5" r="5.5" fill="#d0d0d0"/><circle cx="8.5" cy="8.5" r="3.9" fill="#242424"/><circle cx="8.5" cy="8.5" r="2.3" fill="none" stroke="#a0a0a0" stroke-width=".9"/></svg>
<!-- usage arrow -->
<svg style="left:12px;top:606px" width="10" height="7" viewBox="0 0 10 7"><path d="M0 .3H9.6L4.8 6.8Z" fill="#8a8a8a"/></svg>
<!-- check -->
<svg style="left:180.5px;top:631px" width="13" height="12" viewBox="0 0 13 12"><path d="M1.4 6.2L4.8 9.6L11.6 1.8" fill="none" stroke="#0f7af0" stroke-width="2"/></svg>
<!-- reset arrow -->
<svg style="left:387px;top:631px" width="13" height="11" viewBox="0 0 13 11"><path d="M4.8 .8L1.2 4.2L4.8 7.6" fill="none" stroke="#c4c4c4" stroke-width="1.7"/><path d="M1.6 4.2H8.6A3 3 0 0 1 8.6 10.2H6.8" fill="none" stroke="#c4c4c4" stroke-width="1.7"/></svg>

<!-- stats tab icon -->
<svg style="left:430.5px;top:791.5px" width="18" height="18" viewBox="0 0 18 18">
<defs><clipPath id="sic2"><circle cx="7.2" cy="7.4" r="6.2"/></clipPath></defs>
<g clip-path="url(#sic2)" fill="#777"><rect x="1" y="4.4" width="3.2" height="3.2"/><rect x="4.2" y="1.2" width="3.2" height="3.2"/><rect x="7.4" y="4.4" width="3.2" height="3.2"/><rect x="4.2" y="7.6" width="3.2" height="3.2"/><rect x="10.6" y="1.2" width="3.2" height="3.2"/><rect x="1" y="10.8" width="3.2" height="3.2"/><rect x="7.4" y="10.8" width="3.2" height="3.2"/><rect x="10.6" y="7.6" width="3.2" height="3.2"/></g>
<circle cx="7.2" cy="7.4" r="6.2" fill="none" stroke="#c4c4c4" stroke-width="1.3"/>
<rect x="10.6" y="9.6" width="8" height="9" fill="#242424"/>
<rect x="13.2" y="9.6" width="2.2" height="2" fill="#e4e4e4"/><path d="M12.4 12.6H15.4V16H16.6V17.2H12.2V16H13.4V13.8H12.4Z" fill="#e4e4e4"/>
</svg>
<svg style="left:564.5px;top:797px" width="7" height="7" viewBox="0 0 7 7"><path d="M.7 .7L6.3 6.3M6.3 .7L.7 6.3" stroke="#c0c0c0" stroke-width="1.4"/></svg>
<!-- bullets -->
<svg style="left:448.5px;top:837.5px" width="6" height="96" viewBox="0 0 6 96"><g fill="#d8d8d8"><circle cx="2.6" cy="2.6" r="2.2"/><circle cx="2.6" cy="24.6" r="2.2"/><circle cx="2.6" cy="46.6" r="2.2"/><circle cx="2.6" cy="68.6" r="2.2"/><circle cx="2.6" cy="90.6" r="2.2"/></g></svg>

<!-- status: content drawer -->
<svg style="left:13.5px;top:969.5px" width="17" height="17" viewBox="0 0 17 17"><path d="M.4 .8Q.4 .2 1 .2H5.6L7.2 2.4H.4Z" fill="#8e8e8e"/><path d="M.4 3.6H11V6.6A5 5 0 0 0 7.4 13.4H1.2Q.4 13.4 .4 12.6Z" fill="#8e8e8e"/><circle cx="11.8" cy="10" r="3.5" fill="none" stroke="#c8c8c8" stroke-width="1.4"/><path d="M9.4 12.6L6.6 15.8" stroke="#c8c8c8" stroke-width="1.6" stroke-linecap="round"/></svg>
<!-- output log -->
<svg style="left:148px;top:970px" width="13" height="16" viewBox="0 0 13 16"><path d="M1 2.4H12V14.8Q12 15.8 11 15.8H2Q1 15.8 1 14.8Z" fill="#c0c0c0"/><path d="M2.4 .4V3M5.2 .4V3M8 .4V3M10.8 .4V3" stroke="#c0c0c0" stroke-width="1.3"/><path d="M3.2 6.6L5.8 9L3.2 11.4" stroke="#242424" stroke-width="1.3" fill="none"/><path d="M6.4 12.2H10" stroke="#242424" stroke-width="1.3"/></svg>
<!-- cmd -->
<svg style="left:254px;top:972px" width="17" height="14" viewBox="0 0 17 14"><rect x=".7" y=".7" width="15.2" height="12.2" fill="none" stroke="#c0c0c0" stroke-width="1.4"/><rect x=".7" y=".7" width="15.2" height="2.2" fill="#c0c0c0"/><path d="M3.4 5.4L6.4 7.8L3.4 10.2" stroke="#c0c0c0" stroke-width="1.3" fill="none"/><path d="M7.6 10.6H12" stroke="#c0c0c0" stroke-width="1.3"/></svg>
<!-- unsaved -->
<svg style="left:1499px;top:970.5px" width="17" height="16" viewBox="0 0 17 16"><path d="M0 .8Q0 0 .8 0H9.6L12.4 2.8V9.2H8.4V12.8H.8Q0 12.8 0 12Z" fill="#b0b0b0"/><rect x="2.6" y="0" width="6" height="3.8" fill="#5a5a5a"/><rect x="6" y=".6" width="1.6" height="2.6" fill="#c8c8c8"/><rect x="2" y="7.4" width="6" height="5.4" fill="#5a5a5a"/><path d="M12.6 7.6V15.4M9.2 9.4L16 13.6M16 9.4L9.2 13.6" stroke="#e4e4e4" stroke-width="1.7" fill="none"/></svg>
<!-- revision control -->
<svg style="left:1598.5px;top:970px" width="15" height="17" viewBox="0 0 15 17"><circle cx="2.6" cy="2.6" r="2.3" fill="#e0e0e0"/><circle cx="12" cy="2.6" r="2.3" fill="#e0e0e0"/><circle cx="2.6" cy="13.8" r="2.3" fill="#e0e0e0"/><path d="M2.6 2.6V13.8M12 2.6V5.4Q12 8.4 9 8.4H5.4Q2.6 8.4 2.6 11" stroke="#e0e0e0" stroke-width="1.4" fill="none"/></svg>
<svg style="left:1713px;top:980px" width="6" height="6" viewBox="0 0 6 6"><path d="M5.8 0V5.8H0Z" fill="#6a6a6a"/></svg>

<!-- primitive buttons -->
<svg style="left:329px;top:510.5px" width="91" height="17" viewBox="0 0 91 17">
<defs><radialGradient id="pg" cx=".42" cy=".3" r=".75"><stop offset="0" stop-color="#bdbdbd"/><stop offset=".45" stop-color="#858585"/><stop offset="1" stop-color="#4e4e4e"/></radialGradient><linearGradient id="cg" x1="0" y1="0" x2="1" y2="0"><stop offset="0" stop-color="#a6a6a6"/><stop offset=".45" stop-color="#8a8a8a"/><stop offset="1" stop-color="#707070"/></linearGradient>
<clipPath id="pc1"><circle cx="8.4" cy="8.3" r="7.6"/></clipPath><clipPath id="pc3"><circle cx="45.1" cy="8.3" r="7.6"/></clipPath><clipPath id="pc4"><circle cx="63" cy="8.3" r="7.6"/></clipPath><clipPath id="pc5"><circle cx="81.4" cy="8.3" r="7.6"/></clipPath></defs>
<g fill="#d9d9dd" stroke="#26262a" stroke-width="1"><circle cx="8.4" cy="8.3" r="7.8"/><circle cx="27" cy="8.3" r="7.8"/><circle cx="45.1" cy="8.3" r="7.8"/><circle cx="63" cy="8.3" r="7.8"/><circle cx="81.4" cy="8.3" r="7.8"/></g>
<rect x="5" y="0" width="8.6" height="17" fill="url(#cg)" clip-path="url(#pc1)"/>
<circle cx="27" cy="8.3" r="7.3" fill="url(#pg)"/><path d="M24.6 1.2A7.5 7.5 0 0 0 24.6 15.4" fill="none" stroke="#e58c12" stroke-width="1.3"/>
<g clip-path="url(#pc3)"><path d="M38.4 8L45.6 5.6L53 7.6L46 11Z" fill="#8e8e8e"/><path d="M38.4 8L46 11L53 7.6V8.4L46 11.8L38.4 8.8Z" fill="#6c6c6c"/></g>
<g clip-path="url(#pc4)"><path d="M57.4 2.2L67.4 .6L70.6 2.4V13L66 16.4L57.4 14Z" fill="#7b7b7b"/><path d="M66 4.2L70.6 2.4V13L66 16.4Z" fill="#6a6a6a"/><path d="M57.4 2.2L67.4 .6L70.6 2.4L66 4.2Z" fill="#8c8c8c"/></g>
<g clip-path="url(#pc5)"><path d="M75 7.6L84.4 2.4L89.4 4.6V9L81.6 14.4L75 11.6Z" fill="#8a8a8a"/><path d="M75 7.6L81.6 10.2V14.4L75 11.6Z" fill="#6e6e6e"/><path d="M81.6 10.2L89.4 4.6V9L81.6 14.4Z" fill="#7c7c7c"/><path d="M78.4 7L80.6 5.6L82.6 6.6L80.4 8Z" fill="#2c2c2c"/><path d="M82.4 4.8L84.6 3.6L86.6 4.6L84.4 5.8Z" fill="#2c2c2c"/></g>
</svg>
<!-- text -->
<span class="t" style="left:69.10px;top:8px;font-size:13.39px;letter-spacing:-0.227px">File</span>
<span class="t" style="left:113.20px;top:8px;font-size:13.39px;letter-spacing:-0.292px">Edit</span>
<span class="t" style="left:159.47px;top:8px;font-size:13.39px;letter-spacing:-0.166px">Asset</span>
<span class="t" style="left:215.94px;top:8px;font-size:13.39px;letter-spacing:-0.619px">Window</span>
<span class="t" style="left:284.90px;top:8px;font-size:13.39px;letter-spacing:-0.190px">Tools</span>
<span class="t" style="left:340.40px;top:8px;font-size:13.39px;letter-spacing:-0.126px">Help</span>
<span class="t w" style="left:100.10px;top:39px;font-size:13.39px;letter-spacing:-0.348px">M_Outline*</span>
<span class="t" style="left:145.57px;top:74px;font-size:13.39px;letter-spacing:-0.711px">Apply</span>
<span class="t" style="left:224.99px;top:74px;font-size:13.39px;letter-spacing:-0.150px">Search</span>
<span class="t" style="left:313.60px;top:74px;font-size:13.39px;letter-spacing:-0.475px">Home</span>
<span class="t" style="left:391.30px;top:74px;font-size:13.39px;letter-spacing:-0.059px">Hierarchy</span>
<span class="t" style="left:507.50px;top:74px;font-size:13.39px;letter-spacing:-0.307px">Live Update</span>
<span class="t" style="left:644.82px;top:74px;font-size:13.39px;letter-spacing:-0.507px">Clean Graph</span>
<span class="t" style="left:773.50px;top:74px;font-size:13.39px;letter-spacing:-0.201px">Preview State</span>
<span class="t" style="left:912.20px;top:74px;font-size:13.39px;letter-spacing:-0.227px">Hide Unrelated</span>
<span class="t w" style="left:1069.09px;top:74px;font-size:13.39px;letter-spacing:-0.230px">Stats</span>
<span class="t" style="left:1146.50px;top:74px;font-size:13.39px;letter-spacing:-0.162px">Platform Stats</span>
<span class="t" style="left:51.10px;top:113px;font-size:13.39px;color:#d4d4d4">Perspective</span>
<span class="t" style="left:163.40px;top:113px;font-size:13.39px;letter-spacing:0.377px;color:#d4d4d4">Lit</span>
<span class="t" style="left:200.59px;top:113px;font-size:13.39px;letter-spacing:-0.540px;color:#d4d4d4">Show</span>
<span class="t ns" style="left:556.95px;top:115px;font-size:18.95px;letter-spacing:0.254px;color:#929292">M_Outline</span>
<span class="t ns" style="left:669.75px;top:115px;font-size:18.95px;letter-spacing:0.243px;color:#929292">Material Graph</span>
<span class="t w" style="left:33.90px;top:539px;font-size:13.39px;letter-spacing:-0.141px">Details</span>
<span class="t" style="left:196.10px;top:539px;font-size:13.39px;letter-spacing:-0.169px">Parameters</span>
<span class="t" style="left:47.41px;top:570px;font-size:13.39px;letter-spacing:0.026px">mor</span>
<span class="t b" style="left:28.32px;top:604px;font-size:11.33px;letter-spacing:-0.360px">Usage</span>
<span class="t" style="left:28.13px;top:631px;font-size:11.33px">Used with Morph Targets</span>
<span class="t" style="left:452.89px;top:794px;font-size:13.39px;letter-spacing:0.020px">Stats</span>
<span class="t" style="left:33.62px;top:972px;font-size:13.39px;letter-spacing:-0.290px">Content Drawer</span>
<span class="t" style="left:165.67px;top:972px;font-size:13.39px;letter-spacing:-0.340px">Output Log</span>
<span class="t" style="left:273.82px;top:972px;font-size:13.39px;letter-spacing:-0.414px">Cmd</span>
<span class="t" style="left:1520.03px;top:972px;font-size:13.39px;letter-spacing:-0.272px">2 Unsaved</span>
<span class="t" style="left:1618.50px;top:972px;font-size:13.39px;letter-spacing:-0.303px">Revision Control</span>
<span class="t m" style="left:464.68px;top:834px;font-size:12.6px;color:#c8c8c8;transform-origin:0 0;transform:scaleX(.9245)">Base pass shader: 222 instructions</span>
<span class="t m" style="left:464.68px;top:856px;font-size:12.6px;color:#c8c8c8;transform-origin:0 0;transform:scaleX(.9245)">Base pass vertex shader: 244 instructions</span>
<span class="t m" style="left:465.41px;top:878px;font-size:12.6px;color:#c8c8c8;transform-origin:0 0;transform:scaleX(.9245)">Texture samplers: 4/16</span>
<span class="t m" style="left:465.41px;top:900px;font-size:12.6px;color:#c8c8c8;transform-origin:0 0;transform:scaleX(.9245)">Texture Lookups (Est.): VS(0), PS(3)</span>
<span class="t m" style="left:464.84px;top:922px;font-size:12.6px;color:#c8c8c8;transform-origin:0 0;transform:scaleX(.9245)">Shader Count: 2</span>
<span class="t m" style="left:338.49px;top:971px;font-size:12.6px;color:#6c6c6c;transform-origin:0 0;transform:scaleX(.9245)">Enter Console Command</span>
<!-- rotated side tab labels -->
<span class="t" style="left:1707.5px;top:179.3px;font-size:13px;transform-origin:0 0;transform:rotate(-90deg);letter-spacing:-.08px">Palette</span>
<span class="t" style="left:1707.5px;top:354.8px;font-size:13px;transform-origin:0 0;transform:rotate(-90deg);letter-spacing:.14px">Substrate</span>
<!-- watermarks -->
<span class="t b" style="left:1614.6px;top:112.5px;font-size:20px;color:#2c2c2c;transform-origin:0 0;transform:scaleX(.875)">Zoom 1:1</span>
<span class="t b" style="left:1426.9px;top:702.3px;font-size:63px;color:#fff;-webkit-text-stroke:2.4px #fff;opacity:.185;transform-origin:0 0;transform:scaleX(.796);letter-spacing:1px">MATERIAL</span>
<!-- red highlight rectangle -->
<div class="a" style="left:-3px;top:559px;width:464px;height:126px;border:3px solid #ea222c"></div>
</body>
</html>
